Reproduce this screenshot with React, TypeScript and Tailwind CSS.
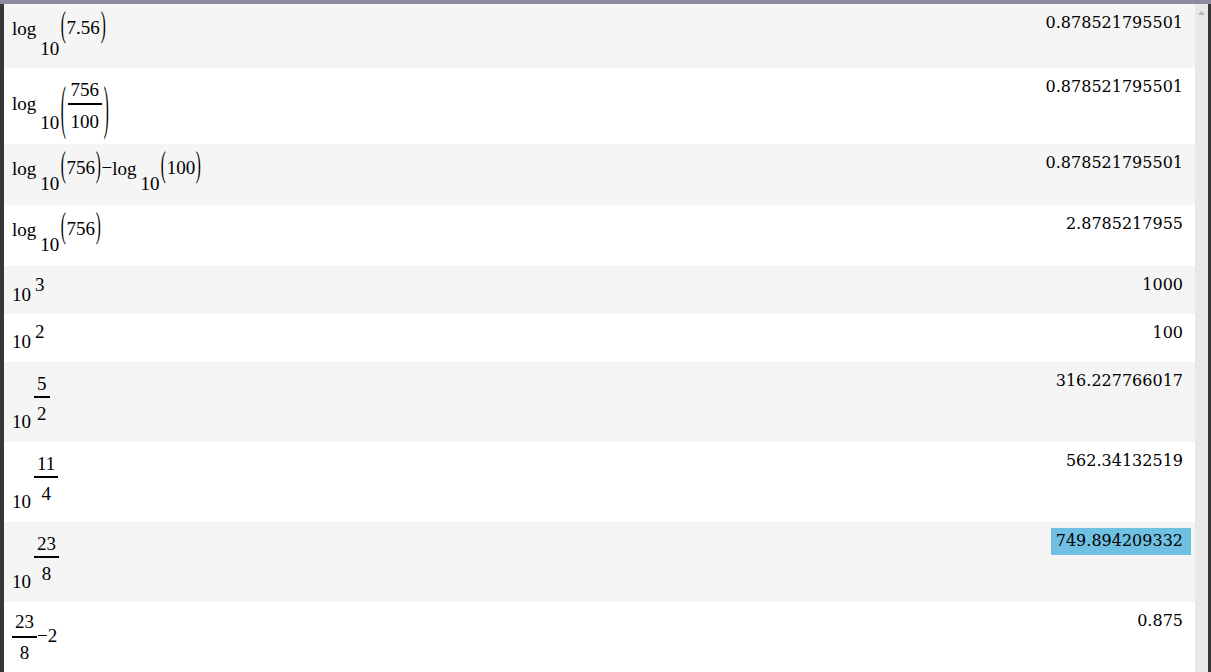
import React from "react";

const mathFont = "font-['Liberation_Serif',serif] text-[19px] leading-[19px] text-black";
const valueFont = "font-['DejaVu_Serif',serif] text-[16px] leading-[22px] text-black";

function Paren({ side, scale }: { side: "(" | ")"; scale: string }) {
  return <span className={`inline-block scale-x-[0.8] ${scale}`}>{side}</span>;
}

function Frac({ num, den, gapTop, gapBottom }: { num: string; den: string; gapTop: string; gapBottom: string }) {
  return (
    <div className="flex flex-col items-stretch">
      <span className="px-[3px] text-center">{num}</span>
      <div className={`h-[2px] bg-black ${gapTop}`} />
      <span className={`px-[3px] text-center ${gapBottom}`}>{den}</span>
    </div>
  );
}

function Row({
  grey,
  h,
  value,
  selected,
  children,
}: {
  grey?: boolean;
  h: string;
  value: string;
  selected?: boolean;
  children: React.ReactNode;
}) {
  return (
    <div className={`flex justify-between shrink-0 ${h} ${grey ? "bg-[#f5f5f5]" : "bg-white"}`}>
      <div className={`flex items-start pl-2 ${mathFont}`}>{children}</div>
      <div className={`pt-2 pr-3 ${valueFont}`}>
        {selected ? (
          <span className="inline-block bg-[#6fc0e2] pl-[5px] pr-[8px] -mr-[8px] pt-[2px] pb-[3px] -mt-[2px]">
            {value}
          </span>
        ) : (
          value
        )}
      </div>
    </div>
  );
}

// log_10( arg ) with small parens
function LogSmall({ arg, subTop }: { arg: string; subTop: string }) {
  return (
    <>
      <span className="mt-[15px]">log</span>
      <span className={`ml-[4px] ${subTop}`}>10</span>
      <span className="ml-[1px] mt-[14px] flex items-center">
        <Paren side="(" scale="scale-y-[1.9] -translate-y-[4px]" />
        <span>{arg}</span>
        <Paren side=")" scale="scale-y-[1.9] -translate-y-[4px]" />
      </span>
    </>
  );
}

function ExpFrac({ num, den }: { num: string; den: string }) {
  return (
    <>
      <span className="mt-[50px]">10</span>
      <div className="ml-[3px] mt-[12px]">
        <Frac num={num} den={den} gapTop="mt-[3px]" gapBottom="mt-[6px]" />
      </div>
    </>
  );
}

export default function App() {
  return (
    <div className="w-[1211px] h-[672px] flex flex-col overflow-hidden bg-white">
      <div className="h-[4px] shrink-0 bg-[#8b8ba2]" />
      <div className="flex flex-1 min-h-0">
        <div className="w-[4px] shrink-0 bg-[#373737]" />
        <div className="flex-1 flex flex-col overflow-hidden">
          <Row grey h="h-[64px]" value="0.878521795501">
            <LogSmall arg="7.56" subTop="mt-[35px]" />
          </Row>

          <Row h="h-[76px]" value="0.878521795501">
            <span className="mt-[26px]">log</span>
            <span className="ml-[4px] mt-[45px]">10</span>
            <span className="ml-[1px] mt-[12px] flex items-center">
              <Paren side="(" scale="scale-y-[3.1] translate-y-[1px]" />
              <span className="px-[1px]">
                <Frac num="756" den="100" gapTop="mt-[4px]" gapBottom="mt-[7px]" />
              </span>
              <Paren side=")" scale="scale-y-[3.1] translate-y-[1px]" />
            </span>
          </Row>

          <Row grey h="h-[61px]" value="0.878521795501">
            <LogSmall arg="756" subTop="mt-[30px]" />
            <span className="mt-[14px]">−</span>
            <LogSmall arg="100" subTop="mt-[30px]" />
          </Row>

          <Row h="h-[61px]" value="2.8785217955">
            <LogSmall arg="756" subTop="mt-[30px]" />
          </Row>

          <Row grey h="h-[48px]" value="1000">
            <span className="mt-[19px]">10</span>
            <span className="ml-[4px] mt-[9px]">3</span>
          </Row>

          <Row h="h-[48px]" value="100">
            <span className="mt-[18px]">10</span>
            <span className="ml-[4px] mt-[8px]">2</span>
          </Row>

          <Row grey h="h-[80px]" value="316.227766017">
            <ExpFrac num="5" den="2" />
          </Row>

          <Row h="h-[80px]" value="562.34132519">
            <ExpFrac num="11" den="4" />
          </Row>

          <Row grey h="h-[80px]" value="749.894209332" selected>
            <ExpFrac num="23" den="8" />
          </Row>

          <Row h="h-[80px]" value="0.875">
            <div className="mt-[10px]">
              <Frac num="23" den="8" gapTop="mt-[5px]" gapBottom="mt-[5px]" />
            </div>
            <span className="mt-[24px]">−2</span>
          </Row>
        </div>
        <div className="w-[13px] shrink-0 bg-[#e8e8e8] flex justify-center pt-[7px]">
          <svg width="7" height="4" viewBox="0 0 7 4">
            <path d="M3.5 0 L7 4 L0 4 Z" fill="#b4b4b4" />
          </svg>
        </div>
        <div className="w-[3px] shrink-0 bg-[#373737]" />
      </div>
    </div>
  );
}
